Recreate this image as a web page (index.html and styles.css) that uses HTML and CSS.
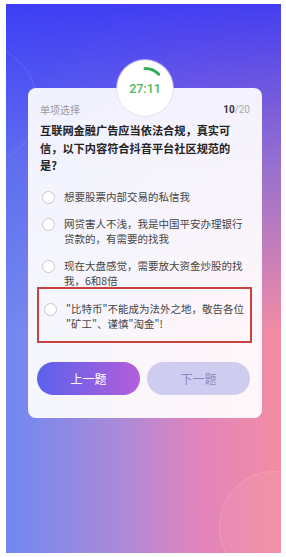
FILE: index.html
```html
<!DOCTYPE html>
<html lang="zh-CN">
<head>
    <meta charset="UTF-8">
    <meta name="viewport" content="width=device-width, initial-scale=1.0">
    <title>答题</title>
    <link rel="stylesheet" href="styles.css">
</head>
<body>
    <div class="frame">
        <div class="ring ring-top"></div>
        <div class="ring ring-bottom"></div>
        <div class="card">
            <div class="timer">
                <svg class="timer-arc" width="46" height="46" viewBox="0 0 46 46">
                    <path d="M23 3.5 A19.5 19.5 0 0 1 36.8 9.2" fill="none" stroke="#2fae55" stroke-width="3" stroke-linecap="round"/>
                </svg>
                <span class="timer-text">27:11</span>
            </div>
            <div class="card-head">
                <span class="type">单项选择</span>
                <span class="count"><b>10</b>/20</span>
            </div>
            <p class="question">互联网金融广告应当依法合规，真实可信，以下内容符合抖音平台社区规范的是?</p>
            <div class="options">
                <div class="option"><span class="radio"></span><span class="text">想要股票内部交易的私信我</span></div>
                <div class="option"><span class="radio"></span><span class="text">网贷害人不浅，我是中国平安办理银行贷款的，有需要的找我</span></div>
                <div class="option"><span class="radio"></span><span class="text">现在大盘感觉，需要放大资金炒股的找我，6和8倍</span></div>
                <div class="option marked"><span class="radio"></span><span class="text">"比特币"不能成为法外之地，敬告各位<wbr>"矿工"、谨慎"淘金"!</span></div>
            </div>
            <div class="buttons">
                <button class="btn prev">上一题</button>
                <button class="btn next">下一题</button>
            </div>
        </div>
    </div>
</body>
</html>
```

FILE: styles.css
```css
body {
    margin: 0;
    background: #fff;
    font-family: "Noto Sans CJK SC", "Noto Sans", sans-serif;
}
.frame {
    position: relative;
    overflow: hidden;
    margin: 4px 5px 4px 6px;
    height: 549px;
    padding-top: 84px;
    box-sizing: border-box;
    background:
        linear-gradient(to bottom, rgba(58, 58, 245, 0.95) 0%, rgba(80, 90, 240, 0.55) 30%, rgba(120, 130, 240, 0) 60%),
        linear-gradient(to right, #6f88f1 0%, #a98ad9 40%, #e184bd 70%, #f48da2 100%);
}
.ring {
    position: absolute;
    border: 1px solid rgba(255, 255, 255, 0.12);
    border-radius: 50%;
}
.ring-top {
    width: 120px;
    height: 120px;
    left: -90px;
    top: 40px;
}
.ring-bottom {
    width: 110px;
    height: 110px;
    right: -50px;
    bottom: -30px;
    background: rgba(255, 200, 190, 0.08);
}
.card {
    position: relative;
    margin-left: 22px;
    width: 234px;
    box-sizing: border-box;
    padding: 13px 12px 23px 12px;
    border-radius: 8px;
    background: rgba(255, 255, 255, 0.92);
}
.timer {
    position: absolute;
    left: 89px;
    top: -28px;
    width: 46px;
    height: 46px;
    border-radius: 50%;
    background: #fff;
    border: 5px solid rgba(255, 255, 255, 0.55);
    box-shadow: 0 0 0 1px rgba(220, 220, 230, 0.6);
    display: flex;
    align-items: center;
    justify-content: center;
}
.timer-arc {
    position: absolute;
    left: 0;
    top: 0;
}
.timer-text {
    color: #4cb565;
    font-family: Roboto, "Noto Sans", sans-serif;
    font-size: 12.5px;
    font-weight: 500;
    margin-top: 1px;
}
.card-head {
    display: flex;
    justify-content: space-between;
    align-items: center;
    font-size: 10px;
    line-height: 14px;
    color: #9a9a9f;
    margin-top: 2px;
}
.count {
    font-family: Roboto, "Noto Sans", sans-serif;
    font-size: 10px;
    color: #aaa;
}
.count b {
    color: #333;
}
.question {
    margin: 5px 0 0 0;
    max-width: 196px;
    font-size: 11.2px;
    line-height: 17.5px;
    font-weight: bold;
    color: #222;
}
.options {
    margin-top: 15px;
}
.option {
    display: flex;
    align-items: flex-start;
    margin-bottom: 13px;
    font-size: 10.5px;
    line-height: 14.5px;
    color: #444;
}
.radio {
    flex: none;
    width: 11px;
    height: 11px;
    border: 1px solid #c8c8cc;
    border-radius: 50%;
    margin: 1px 9px 0 2px;
    background: #fff;
}
.option.marked {
    margin: -14px -2px 0 -3px;
    padding: 13px 0 10px 3px;
    border: 2px solid #c8433f;
}
.buttons {
    display: flex;
    justify-content: space-between;
    margin: 19px 0 0 -3px;
}
.btn {
    width: 103px;
    height: 33px;
    border: none;
    border-radius: 17px;
    font-family: "Noto Sans CJK SC", sans-serif;
    font-size: 12px;
}
.prev {
    color: #fff;
    background: linear-gradient(to right, #5a62ec, #b35ed9);
}
.next {
    color: #8c89c6;
    background: #cfcdef;
}
```
